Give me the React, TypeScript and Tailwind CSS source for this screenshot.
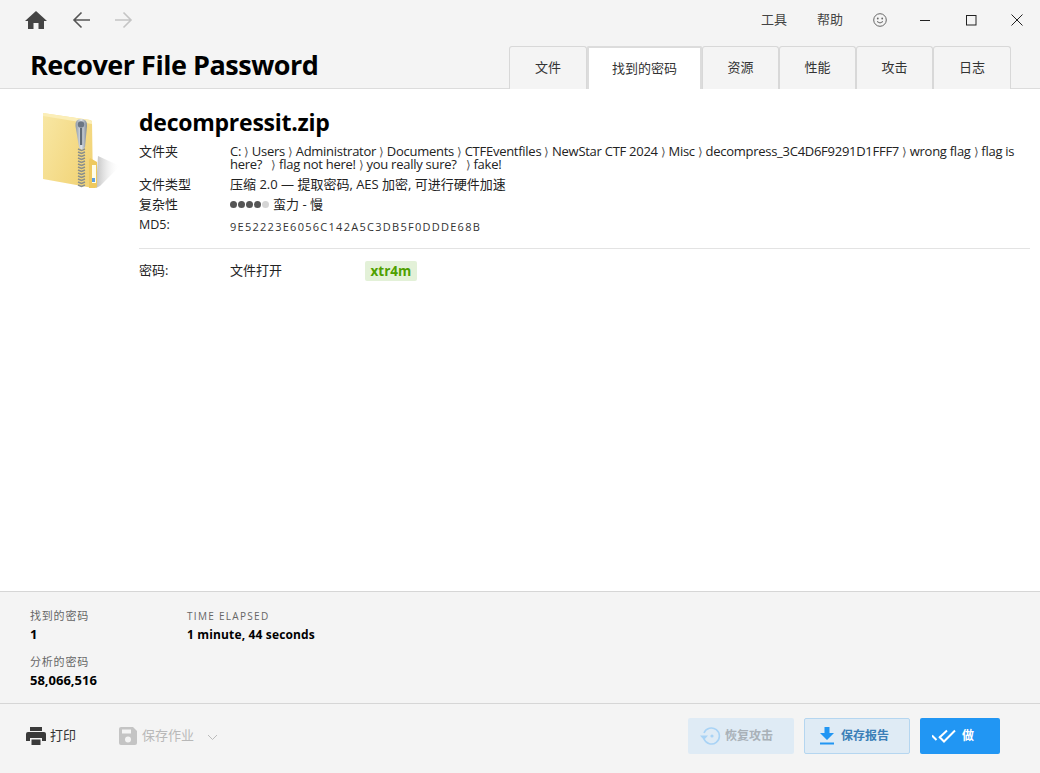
import React from "react";

const sans = "font-['Open_Sans','Noto_Sans_CJK_SC',sans-serif]";

function FolderIcon() {
  return (
    <svg width="82" height="82" viewBox="0 0 82 82" className="block">
      <defs>
        <linearGradient id="fg" x1="0" y1="0" x2="1" y2="0.6">
          <stop offset="0" stopColor="#f8e7a4" />
          <stop offset="1" stopColor="#f2d478" />
        </linearGradient>
        <linearGradient id="sh" x1="0" y1="0" x2="1" y2="0">
          <stop offset="0" stopColor="#b5b5b5" stopOpacity="0.85" />
          <stop offset="1" stopColor="#ffffff" stopOpacity="0" />
        </linearGradient>
        <linearGradient id="zp" x1="0" y1="0" x2="1" y2="0">
          <stop offset="0" stopColor="#8e99a6" />
          <stop offset="0.5" stopColor="#dfe4ea" />
          <stop offset="1" stopColor="#7c8794" />
        </linearGradient>
      </defs>
      <path d="M58 76 L62 74 L82 54 L60 44 Z" fill="url(#sh)" />
      <path d="M5 1 L52 8 Q54 8.5 54 10 L55 76 L5 67 Z" fill="url(#fg)" />
      <path d="M5 1 L52 8 Q54 8.5 54 10 L54 12 L5 4 Z" fill="#fbeeb8" />
      <path d="M51 48 L52 46 L59 50 L59 74 Q59 76 57 76 L51 76 Z" fill="#eec95f" />
      <rect x="54" y="53" width="4" height="18" fill="#fffde8" />
      <rect x="54" y="66" width="3" height="4" fill="#5e9fe0" />
      {[37, 40, 43, 46, 49, 52, 55, 58, 61, 64, 67, 70, 73].map((y) => (
        <path key={y} d="M40 0 l3.5 1.5 l3.5 -1.5" transform={`translate(0 ${y})`} stroke="#8a8f8c" strokeWidth="1.5" fill="none" />
      ))}
      <path d="M43 7 Q49.5 7 49 14 L47 35 Q44 40 41 35 L37.5 14 Q37 7 43 7 Z" fill="url(#zp)" />
      <circle cx="43" cy="12.5" r="3.2" fill="#6b7683" />
      <rect x="42" y="16" width="2.2" height="17" fill="#5f6a76" />
    </svg>
  );
}

function Tab({ label, w, active }: { label: string; w: string; active?: boolean }) {
  return (
    <div
      className={
        active
          ? `${w} h-[43px] -mb-px bg-white border-x-2 border-t-2 border-[#dcdcdc] rounded-t-[2px] flex items-center justify-center text-[13px] text-[#333]`
          : `${w} h-[43px] -mb-px bg-[#f4f4f4] border border-b-0 border-[#d8d8d8] rounded-t-[3px] flex items-center justify-center text-[13px] text-[#333]`
      }
    >
      {label}
    </div>
  );
}

function Row({ label, children, cls }: { label: string; children: React.ReactNode; cls?: string }) {
  return (
    <div className={`flex ${cls ?? ""}`}>
      <div className="w-[91px] shrink-0 text-[#222] tracking-normal">{label}</div>
      <div className="flex-1 min-w-0 text-[#222]">{children}</div>
    </div>
  );
}

const Sep = () => <span className="text-[#555] text-[12px] mx-[3px]">⟩</span>;

export default function App() {
  const path1 = ["C:", "Users", "Administrator", "Documents", "CTFEventfiles", "NewStar CTF 2024", "Misc", "decompress_3C4D6F9291D1FFF7", "wrong flag", "flag is here?\u00a0\u00a0", "flag not here!", "you really sure?\u00a0\u00a0", "fake!"];
  return (
    <div className={`w-[1040px] h-[773px] flex flex-col overflow-hidden bg-white ${sans}`}>
      <header className="h-[89px] shrink-0 bg-[#f4f4f4] border-b border-[#dcdcdc] flex flex-col">
        <div className="h-[46px] flex items-center pl-[25px]">
          <svg width="22" height="20" viewBox="0 0 22 20" className="-mt-[6px]"><path d="M11 1 L22 11 H19 V19 H13.5 V13 H8.5 V19 H3 V11 H0 Z" fill="#444" /></svg>
          <svg width="20" height="18" viewBox="0 0 20 18" className="ml-[25px] -mt-[6px]"><path d="M18 9 H2 M9.5 1.5 L2 9 L9.5 16.5" stroke="#555" strokeWidth="1.6" fill="none" /></svg>
          <svg width="20" height="18" viewBox="0 0 20 18" className="ml-[21px] -mt-[6px]"><path d="M2 9 H18 M10.5 1.5 L18 9 L10.5 16.5" stroke="#c4c4c4" strokeWidth="1.6" fill="none" /></svg>
          <div className="flex-1" />
          <div className="flex items-center -mt-[6px] text-[13px] text-[#444]">
            <span className="w-[26px]">工具</span>
            <span className="w-[26px] ml-[30px]">帮助</span>
            <svg width="14" height="14" viewBox="0 0 14 14" className="ml-[30px]"><circle cx="7" cy="7" r="6.3" stroke="#666" fill="none" /><circle cx="4.8" cy="5.5" r="0.9" fill="#666" /><circle cx="9.2" cy="5.5" r="0.9" fill="#666" /><path d="M4 8.5 Q7 11.5 10 8.5" stroke="#666" fill="none" /></svg>
            <svg width="11" height="11" viewBox="0 0 11 11" className="ml-[33px]"><path d="M0 5.5 H10" stroke="#222" /></svg>
            <svg width="11" height="11" viewBox="0 0 11 11" className="ml-[35px]"><rect x="0.5" y="0.5" width="9.5" height="9.5" stroke="#222" fill="none" /></svg>
            <svg width="12" height="12" viewBox="0 0 12 12" className="ml-[34px] mr-[17px]"><path d="M0.5 0.5 L11.5 11.5 M11.5 0.5 L0.5 11.5" stroke="#222" /></svg>
          </div>
        </div>
        <div className="flex-1 flex items-end pl-[30px] pr-[29px]">
          <h1 className="self-start text-[27px] leading-[38px] font-bold tracking-[-0.48px] text-black flex-1 whitespace-nowrap">Recover File Password</h1>
          <Tab label="文件" w="w-[78px]" />
          <Tab label="找到的密码" w="w-[115px]" active />
          <Tab label="资源" w="w-[77px]" />
          <Tab label="性能" w="w-[77px]" />
          <Tab label="攻击" w="w-[77px]" />
          <Tab label="日志" w="w-[78px]" />
        </div>
      </header>

      <main className="flex-1 flex min-h-0 pl-[38px] pr-[10px] pt-[23px] bg-white">
        <div className="w-[101px] shrink-0"><FolderIcon /></div>
        <div className="flex-1 min-w-0">
          <h2 className="text-[23px] leading-[24px] -mt-[2px] font-bold tracking-[-0.25px] text-black">decompressit.zip</h2>
          <div className="mt-[11px] text-[13px] leading-[13px]">
            <Row label="文件夹">
              <span className="tracking-[-0.27px]">
                {path1.map((p, i) => (
                  <React.Fragment key={i}>
                    {i > 0 && <Sep />}
                    {p}
                  </React.Fragment>
                ))}
              </span>
            </Row>
            <Row label="文件类型" cls="mt-[4px] leading-[18px]">压缩 2.0 — 提取密码, AES 加密, 可进行硬件加速</Row>
            <Row label="复杂性" cls="mt-[1px] leading-[20px]">
              <span className="inline-flex items-center gap-[1px] align-middle -mt-[2px] mr-[4px]">
                <i className="w-[7px] h-[7px] rounded-full bg-[#555]" />
                <i className="w-[7px] h-[7px] rounded-full bg-[#555]" />
                <i className="w-[7px] h-[7px] rounded-full bg-[#555]" />
                <i className="w-[7px] h-[7px] rounded-full bg-[#555]" />
                <i className="w-[7px] h-[7px] rounded-full bg-[#d5d5d5]" />
              </span>
              蛮力 - 慢
            </Row>
            <div className="flex mt-[1px] leading-[20px]">
              <div className="w-[91px] shrink-0 text-[#222] text-[12.5px]">MD5:</div>
              <div className="text-[11px] tracking-[1.27px] text-[#333] pt-[2px]">9E52223E6056C142A5C3DB5F0DDDE68B</div>
            </div>
          </div>
          <div className="mt-[11px] border-t border-[#e3e3e3]" />
          <div className="mt-[11px] flex items-center text-[13px] text-[#222] h-[21px]">
            <div className="w-[91px]">密码:</div>
            <div className="w-[135px]">文件打开</div>
            <div className="px-[5.5px] h-[20px] leading-[20px] rounded-[2px] bg-[#e3f1d8] text-[#4fa000] font-bold text-[13.5px]">xtr4m</div>
          </div>
        </div>
      </main>

      <section className="h-[113px] shrink-0 bg-[#f4f4f4] border-y border-[#d6d6d6] pl-[30px] pt-[16px] flex">
        <div className="w-[157px]">
          <div className="text-[11px] leading-[15px] text-[#666] tracking-[0.8px]">找到的密码</div>
          <div className="text-[13px] leading-[18px] font-bold text-black mt-[2px]">1</div>
          <div className="text-[11px] leading-[15px] text-[#666] tracking-[0.8px] mt-[11px]">分析的密码</div>
          <div className="text-[13px] leading-[18px] font-bold text-black mt-[2px]">58,066,516</div>
        </div>
        <div className="mt-px">
          <div className="text-[10px] leading-[15px] text-[#666] tracking-[1.3px]">TIME ELAPSED</div>
          <div className="text-[12px] leading-[18px] font-bold tracking-[0.15px] text-black mt-[2px]">1 minute, 44 seconds</div>
        </div>
      </section>

      <footer className="h-[69px] shrink-0 bg-[#f4f4f4] flex items-start pt-[14px] pl-[26px] pr-[40px]">
        <div className="h-[36px] flex items-center text-[13px] text-[#333]">
          <svg width="20" height="20" viewBox="0 0 20 20" className="mr-[4px]"><path d="M4 1 H16 V5 H4 Z M2 6 H18 Q20 6 20 8 V15 H16 V12 H4 V15 H0 V8 Q0 6 2 6 Z M5.5 13.5 H14.5 V19 H5.5 Z" fill="#3a3a3a" /></svg>
          打印
        </div>
        <div className="h-[36px] ml-[43px] flex items-center text-[13px] text-[#b8b8b8]">
          <svg width="18" height="18" viewBox="0 0 18 18" className="mr-[5px]"><path fillRule="evenodd" d="M2 0 H14 L18 4 V16 Q18 18 16 18 H2 Q0 18 0 16 V2 Q0 0 2 0 Z M3 2.5 V6.5 H12 V2.5 Z M9 9.5 A3 3 0 1 0 9 15.5 A3 3 0 1 0 9 9.5 Z" fill="#c4c4c4" /></svg>
          保存作业
          <svg width="11" height="7" viewBox="0 0 11 7" className="ml-[13px] mt-[3px]"><path d="M1 1 L5.5 5.5 L10 1" stroke="#bbb" fill="none" /></svg>
        </div>
        <div className="flex-1" />
        <div className="w-[106px] h-[36px] rounded-[2px] bg-[#dfebf5] flex items-center pl-[12px] text-[12px] font-bold text-[#a9b1b8]">
          <svg width="21" height="20" viewBox="0 0 21 20" className="mr-[4px]"><path d="M4 7 A8 8 0 1 1 4 13" stroke="#a9d3f5" strokeWidth="1.6" fill="none" /><path d="M0 9.5 H8 L4 14 Z" fill="#a9d3f5" /><circle cx="12" cy="10" r="1.6" fill="#a9d3f5" /></svg>
          恢复攻击
        </div>
        <div className="w-[106px] h-[36px] ml-[10px] rounded-[2px] bg-[#dfebf5] border border-[#b5d6f0] flex items-center pl-[15px] text-[12px] font-bold text-[#3b7fb8]">
          <svg width="14" height="18" viewBox="0 0 14 18" className="mr-[7px]"><path d="M4.5 0 H9.5 V6 H14 L7 13 L0 6 H4.5 Z M0 15.5 H14 V17.5 H0 Z" fill="#2196f3" /></svg>
          保存报告
        </div>
        <div className="w-[80px] h-[36px] ml-[10px] rounded-[2px] bg-[#2196f3] flex items-center pl-[12px] text-[12px] font-bold text-white">
          <svg width="24" height="14" viewBox="0 0 24 14" className="mr-[6px]"><path d="M0 6.5 L4.5 11 M7 9 L15 1.5 M7 7.5 L12 12.5 L23 1.5" stroke="#fff" strokeWidth="2" fill="none" /></svg>
          做
        </div>
      </footer>
    </div>
  );
}
